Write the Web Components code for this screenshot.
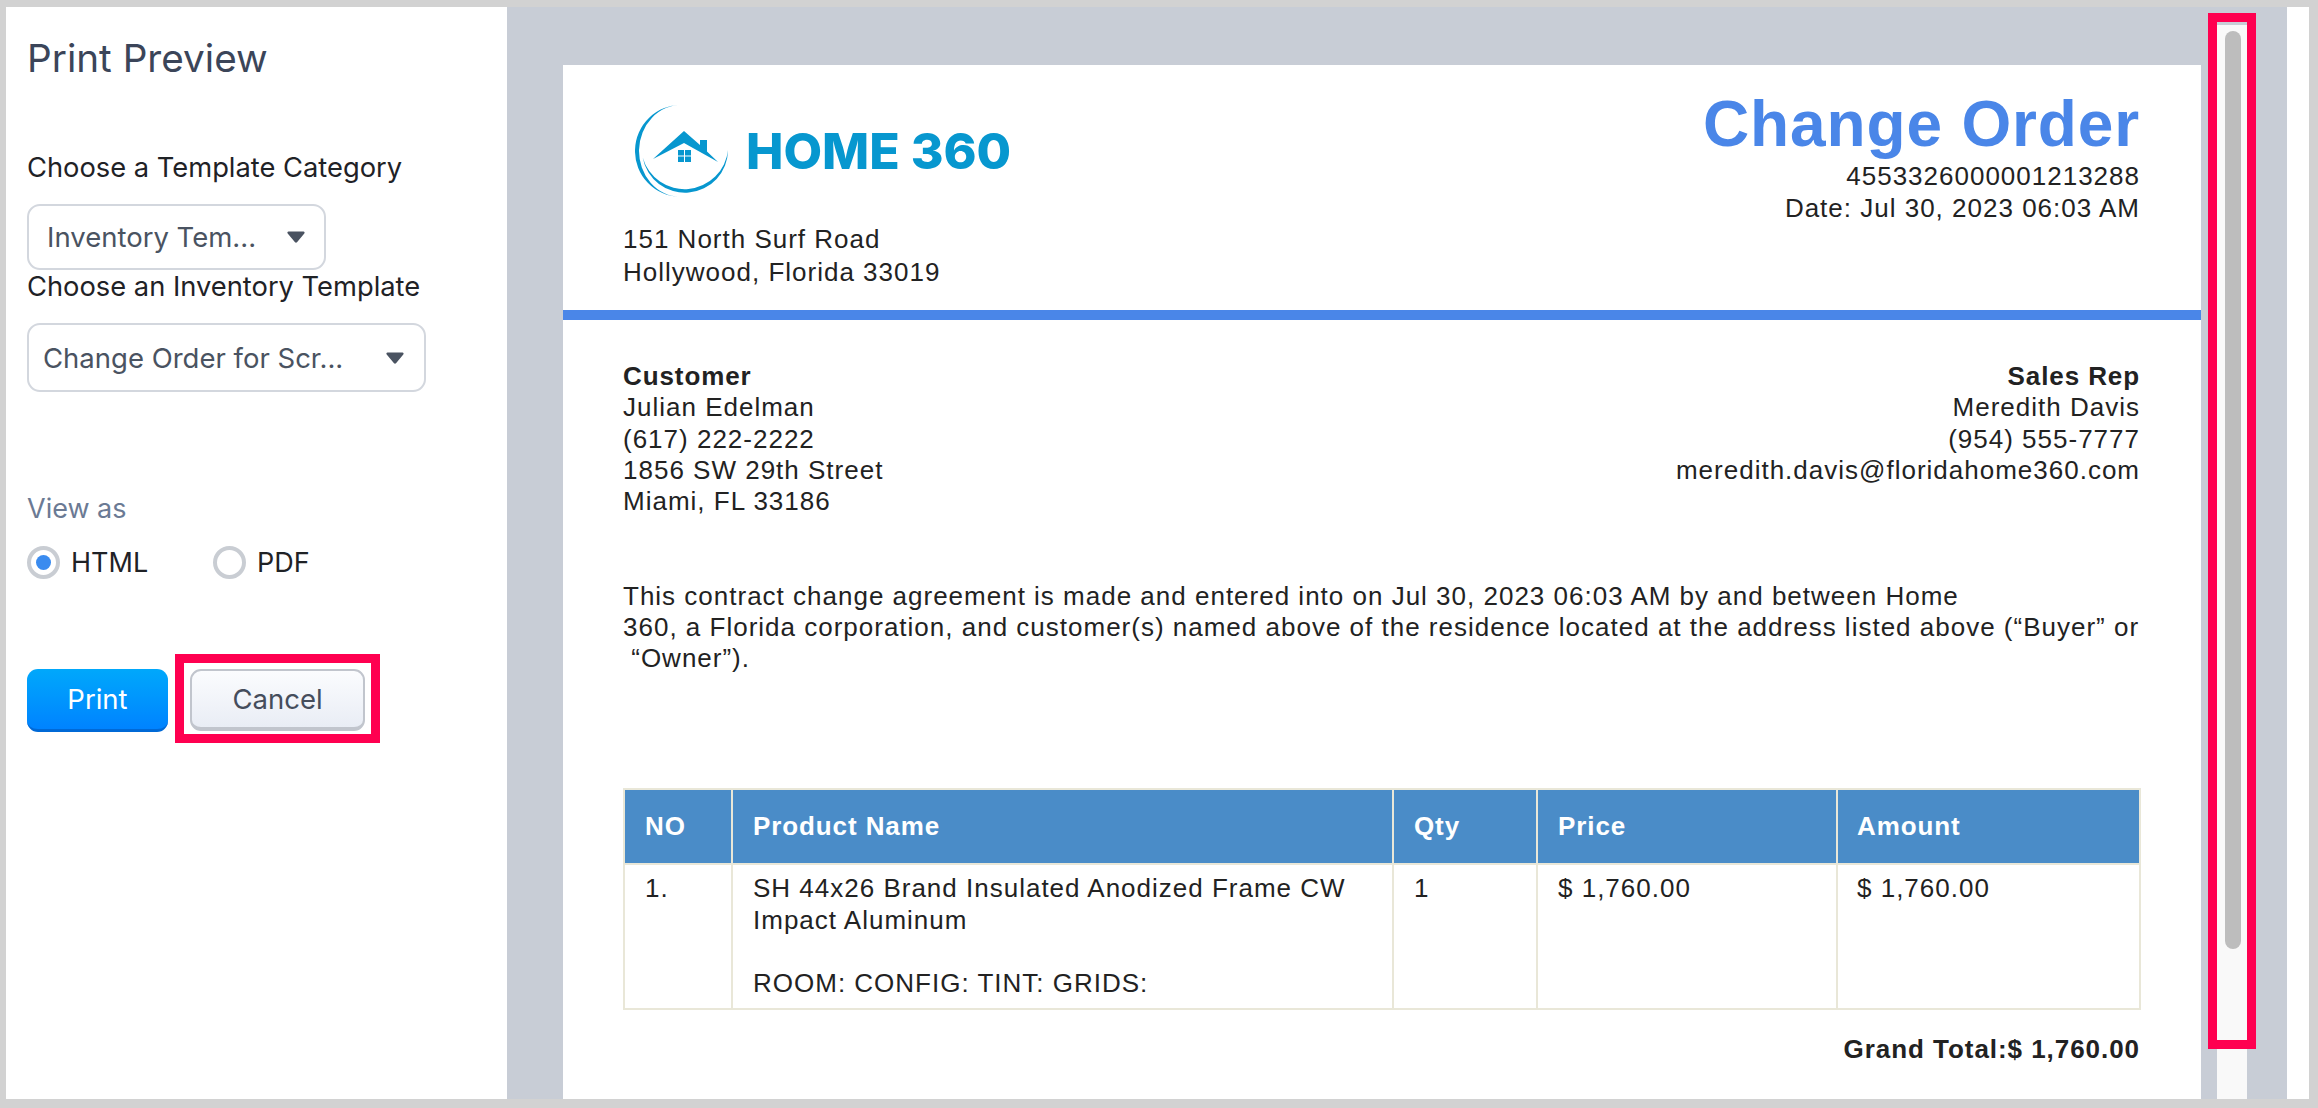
<!DOCTYPE html>
<html lang="en">
<head>
<meta charset="utf-8">
<title>Print Preview</title>
<style>
html,body{margin:0;padding:0;height:1108px;overflow:hidden;background:#d2d2d2}
</style>
</head>
<body>
<print-app></print-app>
<script>
function def(name, css, html){
  customElements.define(name, class extends HTMLElement{
    constructor(){super();const r=this.attachShadow({mode:'open'});r.innerHTML='<style>'+css+'</style>'+html;}
  });
}

def('pick-select',`
:host{display:flex;box-sizing:border-box;align-items:center;justify-content:space-between;background:#fff;border:2px solid #d3d7de;border-radius:13px;
 width:var(--w);height:var(--h);padding:0 var(--pr) 0 var(--pl);color:#4a5361;font:27.5px/34px Inter,"Liberation Sans",sans-serif}
svg{display:block;width:18px;height:12px;flex:none}
`,`<slot></slot><svg viewBox="0 0 18 12"><path d="M1.500 0.500H16.500C17.500 0.500 18 1.600 17.300 2.400L10 11.200C9.500 11.800 8.500 11.800 8 11.200L.7 2.400C0 1.600 .5 .5 1.500 .5Z" fill="#4a5361"/></svg>`);

def('radio-option',`
:host{display:flex;align-items:center;gap:11px;width:186px;height:33px;color:#1f2226;font:27px/33px Inter,"Liberation Sans",sans-serif}
i{box-sizing:border-box;display:flex;align-items:center;justify-content:center;width:33px;height:33px;border:4px solid #c9cdd3;border-radius:50%;background:#fff;flex:none}
:host([checked]) b{display:block;width:15px;height:15px;border-radius:50%;background:#3a8bef}
`,`<i><b></b></i><slot></slot>`);

def('mark-box',`
:host{display:block;position:absolute;box-sizing:border-box;border:9px solid #ff0050;pointer-events:none}
`,``);

def('print-button',`
:host{display:flex;box-sizing:border-box;align-items:center;justify-content:center;width:141px;height:63px;border-radius:11px;
 color:#fff;background:linear-gradient(#00a8fb,#0083ff);border-bottom:3px solid #0069d6;font:27.5px/34px Inter,"Liberation Sans",sans-serif}
`,`<slot></slot>`);

def('cancel-button',`
:host{display:block;position:relative;margin-left:22px}
div{display:flex;box-sizing:border-box;align-items:center;justify-content:center;width:175px;height:62px;border-radius:11px;
 color:#454d5c;background:linear-gradient(#fbfcfe,#e9edf5);border:2px solid #c1c5cd;border-bottom-width:4px;font:27.5px/34px Inter,"Liberation Sans",sans-serif}
mark-box{left:-15px;top:-15px;width:205px;height:89px}
`,`<div><slot></slot></div><mark-box></mark-box>`);

def('side-panel',`
:host{display:block;box-sizing:border-box;width:501px;flex:none;background:#fff;padding:26px 0 0 21px;font-family:Inter,"Liberation Sans",sans-serif}
h1{margin:0 0 67px;font:400 38.7px/51px Inter,"Liberation Sans",sans-serif;color:#3b4559}
.l{font-size:27.3px;line-height:34px;color:#1f2226;margin-bottom:19px}
.l2{margin-bottom:19px}
.v{font-size:27px;line-height:34px;color:#6b7a94;margin:100px 0 20px}
.row{display:flex}
.btns{display:flex;margin-top:90px;align-items:flex-start}
.a{--w:299px;--h:66px;--pl:18px;--pr:19px}
.b{--w:399px;--h:69px;--pl:14px;--pr:20px}
`,`
<h1>Print Preview</h1>
<div class="l">Choose a Template Category</div>
<pick-select class="a">Inventory Tem...</pick-select>
<div class="l l2">Choose an Inventory Template</div>
<pick-select class="b">Change Order for Scr...</pick-select>
<div class="v">View as</div>
<div class="row"><radio-option checked>HTML</radio-option><radio-option>PDF</radio-option></div>
<div class="btns"><print-button>Print</print-button><cancel-button>Cancel</cancel-button></div>
`);

def('brand-logo',`
:host{display:flex;align-items:center;gap:18px;margin-left:12px;height:92px}
svg{display:block;width:93px;height:92px;flex:none}
span{font:800 50px/92px Inter,"Liberation Sans",sans-serif;color:#0797cf;white-space:nowrap;letter-spacing:0}
`,`<svg viewBox="635 105 93 92" fill="#0797cf">
<path d="M682 105A46 46 0 0 0 680 197A42 46 0 0 1 682 105Z"/>
<path d="M728 150A43 43 0 0 1 642.7 157.5A43.6 43.6 0 0 0 728 150Z"/>
<path d="M653 159L684 131L700 145V140H707V151.500L718 162L684 143Z"/>
<path d="M678 150h6v5.500h-6zM685 150h6v5.500h-6zM678 156.500h6v5.500h-6zM685 156.500h6v5.500h-6z"/>
</svg><span><slot></slot></span>`);

def('doc-table',`
:host{display:block;margin-top:114px}
table{border-collapse:collapse;table-layout:fixed;width:1516px}
th,td{border:2px solid #e9e7d8;text-align:left;padding:0 0 0 20px;font-size:26px;line-height:31.5px;letter-spacing:var(--ls)}
th{height:73px;background:#4a8cc8;color:#fff;font-weight:700;vertical-align:middle;letter-spacing:.9px}
td{height:145px;vertical-align:top;padding-top:8px;box-sizing:border-box;color:#222}
th:last-child,td:last-child{padding-left:19px}
`,`<table>
<colgroup><col style="width:108px"><col style="width:661px"><col style="width:144px"><col style="width:300px"><col style="width:303px"></colgroup>
<tr><th>NO</th><th>Product Name</th><th>Qty</th><th>Price</th><th>Amount</th></tr>
<tr><td>1.</td><td>SH 44x26 Brand Insulated Anodized Frame CW<br>Impact Aluminum<br><br>ROOM: CONFIG: TINT: GRIDS:</td><td>1</td><td>$ 1,760.00</td><td>$ 1,760.00</td></tr>
</table>`);

def('doc-page',`
:host{display:block;box-sizing:border-box;width:1638px;flex:none;margin-top:58px;background:#fff;overflow:hidden;color:#222;
 font-family:"Liberation Sans",Arial,sans-serif;font-size:26px;line-height:31px;--ls:1px;letter-spacing:var(--ls)}
header{display:flex;justify-content:space-between;box-sizing:border-box;height:245px;padding:0 61px 0 60px}
.hl{padding-top:40px}
.addr{margin-top:26px;line-height:32.5px}
.hr{padding-top:23px;text-align:right;line-height:32px}
.t{font-size:64px;line-height:72px;font-weight:700;color:#4a86e8;letter-spacing:.85px}
.bar{height:10px;background:#4a86e8}
.main{padding:41px 61px 0 60px}
.cols{display:flex;justify-content:space-between;line-height:31.3px}
.cols b{display:block;letter-spacing:.9px}
.r{text-align:right}
p{margin:64px 0 0;white-space:nowrap}
.g{margin-top:24px;text-align:right;font-weight:700;letter-spacing:.95px}
`,`
<header>
 <div class="hl"><brand-logo>HOME 360</brand-logo><div class="addr">151 North Surf Road<br>Hollywood, Florida 33019</div></div>
 <div class="hr"><div class="t">Change Order</div>4553326000001213288<br>Date: Jul 30, 2023 06:03 AM</div>
</header>
<div class="bar"></div>
<div class="main">
 <div class="cols">
  <div><b>Customer</b>Julian Edelman<br>(617) 222-2222<br>1856 SW 29th Street<br>Miami, FL 33186</div>
  <div class="r"><b>Sales Rep</b>Meredith Davis<br>(954) 555-7777<br>meredith.davis@floridahome360.com</div>
 </div>
 <p>This contract change agreement is made and entered into on Jul 30, 2023 06:03 AM by and between Home<br>360, a Florida corporation, and customer(s) named above of the residence located at the address listed above (“Buyer” or<br>&nbsp;“Owner”).</p>
 <doc-table></doc-table>
 <div class="g">Grand Total:$ 1,760.00</div>
</div>
`);

def('scroll-rail',`
:host{display:block;position:relative;box-sizing:border-box;width:30px;flex:none;margin:18px 0 0 16px;background:#f9f9f9;padding:6px 0 0 8px}
div{width:16px;height:918px;border-radius:8px;background:#bdbdbd}
mark-box{left:-9px;top:-12px;width:48px;height:1036px}
`,`<div></div><mark-box></mark-box>`);

def('preview-pane',`
:host{display:flex;flex:1;min-width:0;background:#c8cdd6;padding-left:56px;overflow:hidden}
`,`<doc-page></doc-page><scroll-rail></scroll-rail>`);

def('print-app',`
:host{display:flex;box-sizing:border-box;width:2318px;height:1108px;padding:7px 9px 9px 6px;background:#d2d2d2}
.edge{width:22px;flex:none;background:#fff}
`,`<side-panel></side-panel><preview-pane></preview-pane><div class="edge"></div>`);
</script>
</body>
</html>
